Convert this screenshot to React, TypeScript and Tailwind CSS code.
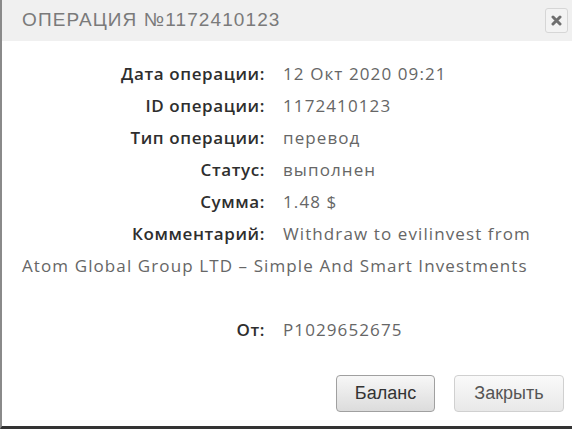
import React from "react";

const rows: [string, string][] = [
  ["Дата операции:", "12 Окт 2020 09:21"],
  ["ID операции:", "1172410123"],
  ["Тип операции:", "перевод"],
  ["Статус:", "выполнен"],
  ["Сумма:", "1.48 $"],
];

function Row({ label, value }: { label: string; value: string }) {
  return (
    <div className="leading-[32px]">
      <span className="inline-block w-[243px] text-right text-[#2e2e2e] font-semibold tracking-[0.6px]">{label}</span>
      <span className="ml-[18px] text-[#666]">{value}</span>
    </div>
  );
}

export default function App() {
  return (
    <div className="w-[572px] h-[429px] bg-white border-l-2 border-b-[3px] border-l-[#8a8a8a] border-b-[#333] flex flex-col overflow-hidden">
      <div className="h-[41px] bg-[#f0f0f0] flex items-center justify-between pl-[20px] pr-[4px] shrink-0">
        <span
          className="text-[19px] tracking-[1.1px] text-[#7a7a7a] uppercase"
          style={{ fontFamily: '"Liberation Sans", Arial, sans-serif' }}
        >
          Операция №1172410123
        </span>
        <button className="w-[23px] h-[25px] border border-[#d6d6d6] rounded-[3px] bg-[#f3f3f3] flex items-center justify-center">
          <svg width="11" height="11" viewBox="0 0 11 11">
            <path d="M2 2 L9 9 M9 2 L2 9" stroke="#6f6f6f" strokeWidth="3" strokeLinecap="round" />
          </svg>
        </button>
      </div>
      <div
        className="pl-[20px] pt-[17px] text-[17px] tracking-[1.1px] flex-1"
        style={{ fontFamily: '"Open Sans", sans-serif' }}
      >
        {rows.map(([l, v]) => (
          <Row key={l} label={l} value={v} />
        ))}
        <div className="leading-[32px] text-[#666]">
          <span className="inline-block w-[243px] text-right text-[#2e2e2e] font-semibold tracking-[0.6px]">Комментарий:</span>
          <span className="ml-[18px]">Withdraw to evilinvest from</span>
          <br />
          Atom Global Group LTD – Simple And Smart Investments
        </div>
        <div className="h-[32px]" />
        <Row label="От:" value="P1029652675" />
      </div>
      <div className="flex justify-end gap-[19px] pr-[8px] pb-[14px]" style={{ fontFamily: '"Liberation Sans", Arial, sans-serif' }}>
        <button className="w-[99px] h-[37px] rounded-[4px] border border-[#a0a0a0] bg-gradient-to-b from-[#f7f7f7] to-[#dcdcdc] text-[18px] text-[#333]">
          Баланс
        </button>
        <button className="w-[110px] h-[37px] rounded-[4px] border border-[#d0d0d0] bg-gradient-to-b from-[#fafafa] to-[#e8e8e8] text-[18px] text-[#555]">
          Закрыть
        </button>
      </div>
    </div>
  );
}
